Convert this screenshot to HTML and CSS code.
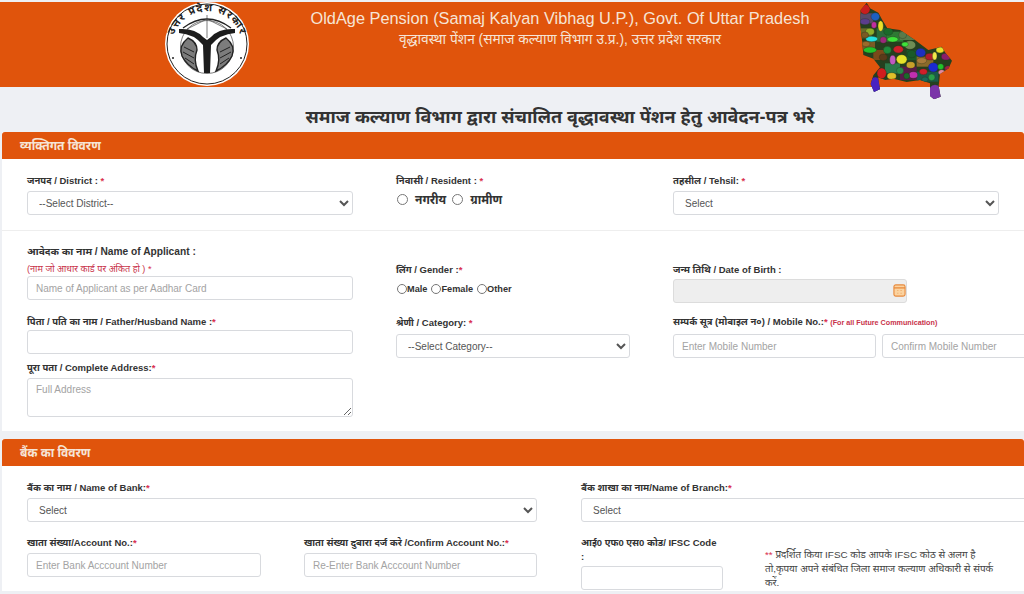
FILE: index.html
```html
<!DOCTYPE html>
<html lang="hi">
<head>
<meta charset="utf-8">
<title>OldAge Pension</title>
<link rel="stylesheet" href="styles.css">
</head>
<body>
<div class="page">
  <header class="site-header">
    <svg class="logo" viewBox="0 0 84 84" aria-label="Uttar Pradesh emblem">
      <defs><path id="logoArc" d="M7.5 50 A35 35 0 1 1 76.5 50"/></defs>
      <circle cx="42" cy="42" r="42" fill="#fff"/>
      <circle cx="42" cy="42" r="40" fill="none" stroke="#222" stroke-width="1"/>
      <circle cx="42" cy="45" r="26.5" fill="none" stroke="#444" stroke-width=".7"/>
      <text class="logo-text"><textPath href="#logoArc" startOffset="50%" text-anchor="middle">उत्तर प्रदेश सरकार</textPath></text>
      <path d="M18 26Q42 8 66 26" fill="none" stroke="#222" stroke-width="1.3"/>
      <path d="M42 13V36M42 17L22 27M42 17L62 27" fill="none" stroke="#444" stroke-width=".7"/>
      <path d="M14 27Q30 26 38 35L42 38 46 35Q54 26 70 27L70 31Q55 32 46 43L45 71H39L38 43Q29 32 14 31Z" fill="#1c1c1c"/>
      <g fill="#7c7c7c" stroke="#222" stroke-width="1.4">
        <path d="M23 36Q13 44 17 54Q22 64 33 69Q28 58 32 48Q32 40 23 36Z"/>
        <path d="M61 36Q71 44 67 54Q62 64 51 69Q56 58 52 48Q52 40 61 36Z"/>
      </g>
      <path d="M19 45L29 50M18 50L29 56M20 56L29 62M65 45L55 50M66 50L55 56M64 56L55 62" stroke="#222" stroke-width="1" fill="none"/>
      <circle cx="8" cy="56" r="1" fill="#222"/><circle cx="76" cy="56" r="1" fill="#222"/>
    </svg>
    <div class="site-title">
      <div class="title-en">OldAge Pension (Samaj Kalyan Vibhag U.P.), Govt. Of Uttar Pradesh</div>
      <div class="title-hi">वृद्धावस्था पेंशन (समाज कल्याण विभाग उ.प्र.), उत्तर प्रदेश सरकार</div>
    </div>
    <svg class="map" viewBox="0 0 330 315" aria-label="Uttar Pradesh map">
      <defs><clipPath id="upClip"><path d="M50 8L60 25 85 38 97 60 112 85 150 90 195 120 235 150 275 140 287 160 306 182 296 205 270 222 266 258 272 290 252 298 240 288 240 250 210 240 170 246 130 236 106 240 84 232 90 268 72 276 62 252 70 226 90 202 70 176 40 165 36 120 30 70 32 30Z"/></clipPath></defs>
      <g clip-path="url(#upClip)">
        <rect width="330" height="315" fill="#25401f"/>
        <rect x="30" y="40" width="40" height="30" fill="#5a4a6a"/>
        <rect x="30" y="85" width="35" height="30" fill="#6a6a2a"/>
        <rect x="30" y="125" width="45" height="25" fill="#7a5a24"/>
        <rect x="80" y="85" width="30" height="40" fill="#2a6a3a"/>
        <rect x="70" y="150" width="35" height="30" fill="#7a4a1a"/>
        <rect x="110" y="95" width="50" height="30" fill="#2e7a34"/>
        <rect x="150" y="95" width="45" height="25" fill="#5a7a4a"/>
        <rect x="170" y="150" width="40" height="30" fill="#1a5a2a"/>
        <rect x="200" y="170" width="50" height="30" fill="#8a6a2a"/>
        <rect x="105" y="190" width="45" height="30" fill="#2a7a4a"/>
        <rect x="150" y="200" width="50" height="40" fill="#5a1a4a"/>
        <rect x="200" y="215" width="65" height="30" fill="#1a5a4a"/>
        <ellipse class="m" cx="45" cy="28" rx="15" ry="15" fill="#c81e1e"/>
        <ellipse class="m" cx="76" cy="50" rx="13" ry="12" fill="#1d5fc0"/>
        <ellipse class="m" cx="45" cy="65" rx="14" ry="9" fill="#5a3d8c"/>
        <ellipse class="m" cx="92" cy="78" rx="8" ry="16" fill="#e9e02a"/>
        <ellipse class="m" cx="72" cy="75" rx="8" ry="10" fill="#c02fa0"/>
        <ellipse class="m" cx="60" cy="95" rx="13" ry="10" fill="#8fae2c"/>
        <ellipse class="m" cx="65" cy="117" rx="18" ry="8" fill="#24e0e0"/>
        <ellipse class="m" cx="45" cy="105" rx="11" ry="9" fill="#7a5a24"/>
        <ellipse class="m" cx="60" cy="150" rx="20" ry="9" fill="#22c22a"/>
        <ellipse class="m" cx="48" cy="132" rx="12" ry="8" fill="#9a6a2a"/>
        <ellipse class="m" cx="115" cy="95" rx="14" ry="11" fill="#1a6a2a"/>
        <ellipse class="m" cx="128" cy="118" rx="16" ry="8" fill="#3ee23a"/>
        <ellipse class="m" cx="100" cy="120" rx="10" ry="10" fill="#9a2a7a"/>
        <ellipse class="m" cx="158" cy="105" rx="12" ry="11" fill="#5a7a4a"/>
        <ellipse class="m" cx="180" cy="135" rx="17" ry="13" fill="#6f8d55"/>
        <ellipse class="m" cx="165" cy="133" rx="10" ry="7" fill="#3ee23a"/>
        <ellipse class="m" cx="145" cy="148" rx="15" ry="11" fill="#d01e2a"/>
        <ellipse class="m" cx="112" cy="150" rx="12" ry="11" fill="#1e8c3c"/>
        <ellipse class="m" cx="128" cy="180" rx="9" ry="14" fill="#c05ac0"/>
        <ellipse class="m" cx="155" cy="178" rx="16" ry="14" fill="#e6e22a"/>
        <ellipse class="m" cx="100" cy="172" rx="12" ry="10" fill="#5a3a1a"/>
        <ellipse class="m" cx="185" cy="162" rx="13" ry="11" fill="#1a5a2a"/>
        <ellipse class="m" cx="212" cy="158" rx="15" ry="13" fill="#1d2fc0"/>
        <ellipse class="m" cx="240" cy="170" rx="14" ry="10" fill="#b01e2a"/>
        <ellipse class="m" cx="270" cy="150" rx="12" ry="9" fill="#e9e02a"/>
        <ellipse class="m" cx="254" cy="168" rx="7" ry="12" fill="#f0e84a"/>
        <ellipse class="m" cx="288" cy="170" rx="14" ry="10" fill="#8a1e6a"/>
        <ellipse class="m" cx="215" cy="182" rx="15" ry="9" fill="#a87a3a"/>
        <ellipse class="m" cx="182" cy="195" rx="13" ry="10" fill="#c8a02a"/>
        <ellipse class="m" cx="250" cy="202" rx="15" ry="14" fill="#1a2ad0"/>
        <ellipse class="m" cx="272" cy="200" rx="9" ry="9" fill="#22c22a"/>
        <ellipse class="m" cx="295" cy="205" rx="11" ry="8" fill="#a01e4a"/>
        <ellipse class="m" cx="275" cy="217" rx="10" ry="8" fill="#e28aa0"/>
        <ellipse class="m" cx="95" cy="220" rx="14" ry="16" fill="#d01e1e"/>
        <ellipse class="m" cx="125" cy="228" rx="14" ry="10" fill="#e0c02a"/>
        <ellipse class="m" cx="150" cy="212" rx="11" ry="10" fill="#2a8a4a"/>
        <ellipse class="m" cx="190" cy="225" rx="13" ry="10" fill="#c02fb0"/>
        <ellipse class="m" cx="170" cy="228" rx="9" ry="9" fill="#1a6a2a"/>
        <ellipse class="m" cx="220" cy="215" rx="12" ry="9" fill="#d01e2a"/>
        <ellipse class="m" cx="245" cy="232" rx="10" ry="10" fill="#2aa04a"/>
        <ellipse class="m" cx="225" cy="238" rx="10" ry="7" fill="#1a6a5a"/>
        <ellipse class="m" cx="76" cy="255" rx="16" ry="24" fill="#4a22c0"/>
        <ellipse class="m" cx="255" cy="278" rx="20" ry="24" fill="#7a34a8"/>
      </g>
    </svg>
  </header>

  <h1 class="page-title">समाज कल्याण विभाग द्वारा संचालित वृद्धावस्था पेंशन हेतु आवेदन-पत्र भरे</h1>

  <section class="panel panel-personal">
    <h2 class="panel-head">व्यक्तिगत विवरण</h2>
    <div class="row-top cols">
      <div>
        <label class="lbl">जनपद / District : <span class="req">*</span></label>
        <select class="ctl"><option>--Select District--</option></select>
      </div>
      <div>
        <label class="lbl">निवासी / Resident : <span class="req">*</span></label>
        <div class="res-radios">
          <input type="radio" name="res"><span>नगरीय</span>
          <input type="radio" name="res"><span>ग्रामीण</span>
        </div>
      </div>
      <div>
        <label class="lbl">तहसील / Tehsil: <span class="req">*</span></label>
        <select class="ctl"><option>Select</option></select>
      </div>
    </div>
    <div class="row-main cols">
      <div>
        <label class="lbl lbl-name">आवेदक का नाम / Name of Applicant :</label>
        <div class="lbl-sub">(नाम जो आधार कार्ड पर अंकित हो ) <span class="req">*</span></div>
        <input class="ctl" placeholder="Name of Applicant as per Aadhar Card">
        <label class="lbl lbl-father">पिता / पति का नाम / Father/Husband Name :<span class="req">*</span></label>
        <input class="ctl">
        <label class="lbl lbl-addr">पूरा पता / Complete Address:<span class="req">*</span></label>
        <textarea class="ctl area" placeholder="Full Address"></textarea>
      </div>
      <div class="col-offset">
        <label class="lbl">लिंग / Gender :<span class="req">*</span></label>
        <div class="gender">
          <label><input type="radio" name="g">Male</label>
          <label><input type="radio" name="g">Female</label>
          <label><input type="radio" name="g">Other</label>
        </div>
        <label class="lbl lbl-cat">श्रेणी / Category: <span class="req">*</span></label>
        <select class="ctl"><option>--Select Category--</option></select>
      </div>
      <div class="col-offset">
        <label class="lbl">जन्म तिथि / Date of Birth :</label>
        <div class="dob">
          <input class="ctl ctl-dob" disabled>
          <svg class="cal" viewBox="0 0 14 14" aria-hidden="true">
            <rect x="1" y="1" width="12" height="12" rx="2" fill="#fbd3a0" stroke="#e88a3c" stroke-width="1.2"/>
            <path d="M1 4.2H13" stroke="#e88a3c" stroke-width="1.4"/>
            <path d="M4.5 7H5.8M8 7H9.5M4.5 10H5.8M8 10H9.5" stroke="#f0b070" stroke-width="1.2"/>
          </svg>
        </div>
        <label class="lbl lbl-mob">सम्पर्क सूत्र (मोबाइल न०) / Mobile No.:<span class="req">*</span> <span class="mini">(For all Future Communication)</span></label>
        <div class="mob-pair">
          <input class="ctl" placeholder="Enter Mobile Number">
          <input class="ctl" placeholder="Confirm Mobile Number">
        </div>
      </div>
    </div>
  </section>

  <section class="panel panel-bank">
    <h2 class="panel-head">बैंक का विवरण</h2>
    <div class="bank-grid">
      <div>
        <label class="lbl">बैंक का नाम / Name of Bank:<span class="req">*</span></label>
        <select class="ctl"><option>Select</option></select>
        <div class="acct-grid">
          <div>
            <label class="lbl">खाता संख्या/Account No.:<span class="req">*</span></label>
            <input class="ctl" placeholder="Enter Bank Acccount Number">
          </div>
          <div>
            <label class="lbl">खाता संख्या दुबारा दर्ज करे /Confirm Account No.:<span class="req">*</span></label>
            <input class="ctl" placeholder="Re-Enter Bank Acccount Number">
          </div>
        </div>
      </div>
      <div>
        <label class="lbl">बैंक शाखा का नाम/Name of Branch:<span class="req">*</span></label>
        <select class="ctl"><option>Select</option></select>
        <div class="ifsc-row">
          <div class="ifsc">
            <label class="lbl lbl-ifsc">आई0 एफ0 एस0 कोड/ IFSC Code :</label>
            <input class="ctl">
          </div>
          <p class="note"><span class="req">**</span> प्रदर्शित किया IFSC कोड आपके IFSC कोठ से अलग है तो,कृपया अपने संबंधित जिला समाज कल्याण अधिकारी से संपर्क करें.</p>
        </div>
      </div>
    </div>
  </section>
</div>
</body>
</html>
```
FILE: styles.css
```css
* { box-sizing: border-box; }
html, body { margin: 0; height: 594px; overflow: hidden; }
body {
  background: #eef0f4;
  font-family: "Liberation Sans", "Noto Sans", "Noto Sans Devanagari", sans-serif;
  color: #333;
}
.page { width: 1024px; height: 594px; overflow: hidden; padding-top: 2px; }

.site-header {
  position: relative;
  height: 85px;
  background: #e0540c;
  display: flex;
  align-items: flex-start;
  padding-left: 165px;
}
.logo { width: 84px; height: 84px; flex: none; }
.logo-text { font-size: 10.5px; font-weight: 700; fill: #222; letter-spacing: 1.2px; }
.site-title { width: 500px; margin-left: 61px; margin-top: 7px; text-align: center; color: #f6e4d6; white-space: nowrap; }
.title-en { font-size: 16.35px; line-height: 19px; }
.title-hi { font-size: 13.75px; line-height: 20px; margin-top: 2px; }
.map { position: absolute; left: 850px; top: -2px; width: 110px; height: 105px; z-index: 2; filter: blur(.35px); }
.m { stroke: #26301a; stroke-width: 1; }

.page-title {
  margin: 0;
  height: 45px;
  padding-left: 96px;
  text-align: center;
  font-size: 18px;
  line-height: 60px;
  font-weight: 700;
  color: #333;
  white-space: nowrap;
}

.panel { margin-left: 2px; width: 1022px; background: #fff; }
.panel-personal { height: 299px; }
.panel-bank { height: 152px; margin-top: 8px; }
.panel-head {
  margin: 0;
  height: 27px;
  padding-left: 18px;
  background: #e0540c;
  color: #f6e4d6;
  font-size: 12px;
  line-height: 29px;
  font-weight: 700;
  border-radius: 3px 3px 0 0;
}

.cols { display: grid; grid-template-columns: 326px 234px 326px; column-gap: 43px; padding-left: 25px; }
.row-top { padding-top: 15px; height: 72px; border-bottom: 1px solid #eee; }
.row-main { padding-top: 14px; }
.col-offset { padding-top: 18px; }

.lbl { display: block; font-size: 9.5px; line-height: 14px; font-weight: 700; color: #333; white-space: nowrap; margin-bottom: 3px; }
.req { color: #d9304f; }
.lbl-name { margin-bottom: 3px; font-size: 10.2px; }
.lbl-sub { font-size: 9.1px; line-height: 14px; color: #c8324a; }
.lbl-father { margin-top: 15px; margin-bottom: 1px; }
.lbl-addr { margin-top: 7px; margin-bottom: 3px; }
.lbl-cat { margin-top: 20px; margin-bottom: 4px; }
.lbl-mob { margin-top: 12px; margin-bottom: 4px; }
.mini { font-size: 7.2px; color: #c8324a; }

.ctl {
  display: block;
  width: 100%;
  height: 24px;
  padding: 0 8px;
  background: #fff;
  border: 1px solid #d8dade;
  border-radius: 3px;
  font-family: "Liberation Sans", sans-serif;
  font-size: 10px;
  color: #555;
  outline: none;
}
.ctl::placeholder { color: #a3a3a3; opacity: 1; }
select.ctl { padding-left: 7px; }
.area { height: 39px; padding-top: 5px; resize: vertical; }

.res-radios { display: flex; align-items: center; font-size: 12px; font-weight: 700; height: 16px; margin-top: 1px; }
.res-radios input { width: 11px; height: 11px; margin: 0 5px 0 1px; }
.res-radios span { margin-right: 5px; margin-left: 2px; }

.gender { display: flex; align-items: center; height: 14px; padding-left: 1px; font-size: 9.2px; font-weight: 700; margin-top: 5px; gap: 4px; }
.gender label { display: flex; align-items: center; }
.gender input { width: 10px; height: 10px; margin: 0; }

.dob { position: relative; width: 234px; margin-top: -1px; }
.ctl-dob { background: #eeeeee; border-color: #dcdcdc; }
.cal { position: absolute; right: 1px; top: 5px; width: 13px; height: 13px; }

.mob-pair { display: flex; gap: 6px; width: 412px; }
.mob-pair .ctl { width: 203px; flex: none; }

.bank-grid { display: grid; grid-template-columns: 510px 500px; column-gap: 44px; padding: 15px 0 0 25px; }
.acct-grid { display: grid; grid-template-columns: 234px 233px; column-gap: 43px; margin-top: 14px; }
.ifsc-row { display: flex; margin-top: 14px; }
.ifsc { width: 142px; flex: none; }
.lbl-ifsc { white-space: normal; width: 137px; margin-bottom: 2px; line-height: 14px; }
.note { margin: 12px 0 0 42px; width: 232px; font-size: 9.9px; line-height: 14px; color: #444; }
```
